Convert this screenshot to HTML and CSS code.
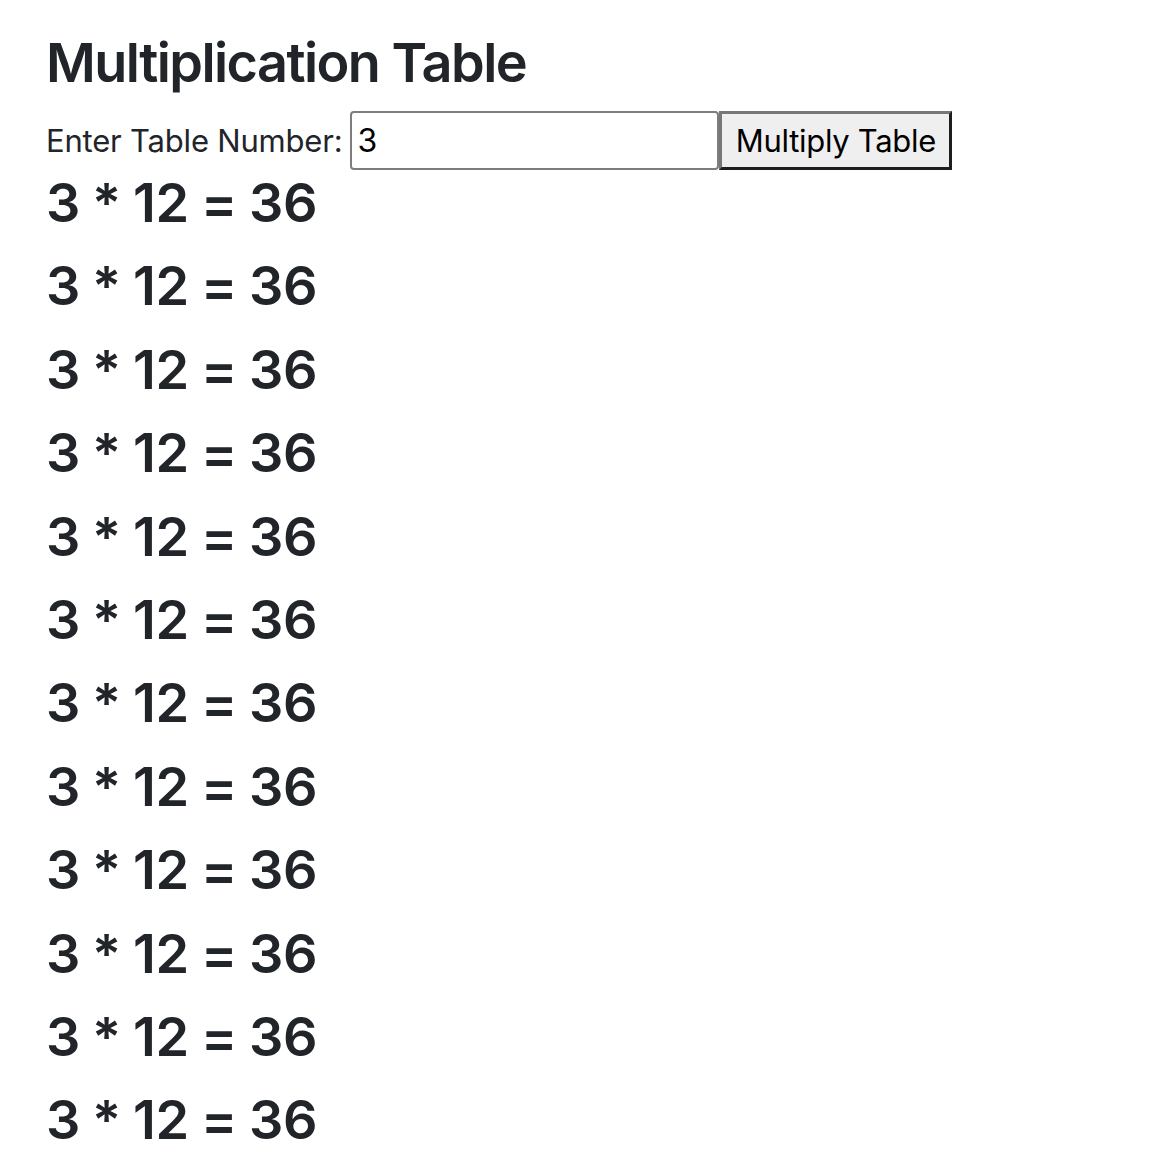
FILE: index.html
```html
<!DOCTYPE html>
<html lang="en">
<head>
<meta charset="utf-8">
<title>Multiplication Table</title>
<link rel="stylesheet" href="styles.css">
</head>
<body>
<div class="page">
  <h1 class="title">Multiplication Table</h1>
  <form class="entry" onsubmit="return false;">
    <label class="entry-label" for="num">Enter Table Number:</label>
    <input class="entry-input" id="num" type="text" value="3">
    <button class="entry-button" type="button">Multiply Table</button>
  </form>
  <div class="results">
    <h1 class="row">3 * 12 = 36</h1>
    <h1 class="row">3 * 12 = 36</h1>
    <h1 class="row">3 * 12 = 36</h1>
    <h1 class="row">3 * 12 = 36</h1>
    <h1 class="row">3 * 12 = 36</h1>
    <h1 class="row">3 * 12 = 36</h1>
    <h1 class="row">3 * 12 = 36</h1>
    <h1 class="row">3 * 12 = 36</h1>
    <h1 class="row">3 * 12 = 36</h1>
    <h1 class="row">3 * 12 = 36</h1>
    <h1 class="row">3 * 12 = 36</h1>
    <h1 class="row">3 * 12 = 36</h1>
  </div>
</div>
</body>
</html>
```

FILE: styles.css
```css
html, body {
  margin: 0;
  padding: 0;
  background: #ffffff;
}

body {
  font-family: Inter, "Noto Sans", "Liberation Sans", sans-serif;
  color: #212529;
}

.page {
  padding: 30px 0 0 46px;
}

.title {
  margin: 0;
  font-size: 54px;
  font-weight: 600;
  line-height: 65px;
  letter-spacing: -1.55px;
  color: #212529;
}

.entry {
  display: flex;
  align-items: center;
  margin-top: 16px;
  height: 59px;
}

.entry-label {
  font-size: 31px;
  letter-spacing: -0.2px;
  margin-right: 8px;
  color: #212529;
}

.entry-input {
  box-sizing: border-box;
  width: 369px;
  height: 59px;
  margin: 0;
  padding: 0 5px;
  border: 2px solid #7d7d7d;
  border-radius: 4px;
  font-family: Inter, "Liberation Sans", sans-serif;
  font-size: 32px;
  color: #000000;
  background: #ffffff;
  outline: none;
}

.entry-button {
  box-sizing: border-box;
  width: 233px;
  height: 59px;
  margin: 0;
  padding: 0 12px;
  border-width: 3px;
  border-style: solid;
  border-color: #777777 #1e1e1e #1e1e1e #777777;
  background: #efefef;
  font-family: Inter, "Liberation Sans", sans-serif;
  font-size: 31px;
  letter-spacing: -0.3px;
  color: #000000;
  text-align: center;
}

.results {
  display: flex;
  flex-direction: column;
}

.row {
  margin: 0 0 18.4px 0;
  font-size: 54px;
  font-weight: 600;
  line-height: 65px;
  letter-spacing: -0.2px;
  word-spacing: -1.5px;
  font-feature-settings: "calt" 0;
  color: #212529;
}
```
